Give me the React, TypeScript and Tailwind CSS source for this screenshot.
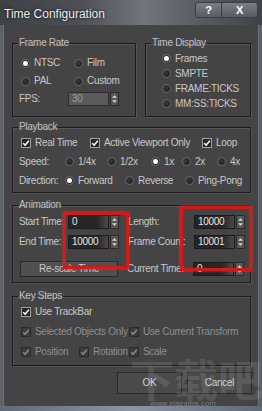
import type { ReactNode } from "react";

const font = "font-['Liberation_Sans','DejaVu_Sans',sans-serif]";

function Radio({ on }: { on?: boolean }) {
  return (
    <span className="flex h-[9px] w-[9px] shrink-0 items-center justify-center rounded-full border border-[#6a6a6a] bg-[radial-gradient(circle_at_35%_35%,#3a3a3a,#161616)]">
      {on && <span className="h-[5px] w-[5px] rounded-full bg-white" />}
    </span>
  );
}

function Check({ dim }: { dim?: boolean }) {
  return (
    <span
      className={
        "flex h-[10px] w-[10px] shrink-0 items-center justify-center border " +
        (dim ? "border-[#2a2a2a] bg-[#3c3c3c]" : "border-[#a0a0a0] bg-[#262626]")
      }
    >
      <svg viewBox="0 0 10 10" className="h-[8px] w-[8px]">
        <path
          d="M1.5 5.2 L4 7.6 L8.6 2.2"
          fill="none"
          stroke={dim ? "#8a8a8a" : "#ffffff"}
          strokeWidth="1.8"
        />
      </svg>
    </span>
  );
}

function Opt({ label, on, w }: { label: string; on?: boolean; w?: string }) {
  return (
    <div className={"flex items-center gap-[4px] " + (w ?? "")}>
      <Radio on={on} />
      <span className="whitespace-nowrap">{label}</span>
    </div>
  );
}

function Box({ label, dim, w }: { label: string; dim?: boolean; w?: string }) {
  return (
    <div className={"flex items-center gap-[4px] " + (w ?? "") + (dim ? " text-[#8e8e8e]" : "")}>
      <Check dim={dim} />
      <span className="whitespace-nowrap">{label}</span>
    </div>
  );
}

function Spin({ value, off }: { value: string; off?: boolean }) {
  return (
    <div className="flex items-center gap-[1px]">
      <div
        className={
          "flex h-[14px] w-[41px] items-center border pl-[3px] text-[10px] " +
          (off
            ? "border-[#2e2e2e] bg-[#5a5a5a] text-[#9a9a9a]"
            : "border-[#1c1c1c] bg-[linear-gradient(90deg,#262626_70%,#4a4a4a)] text-[#e6e6e6]")
        }
      >
        {value}
      </div>
      <div className="flex h-[14px] w-[9px] flex-col items-center justify-center gap-[2px] border border-[#2a2a2a] bg-[#585858]">
        <svg viewBox="0 0 6 3" className="h-[3px] w-[5px]">
          <path d="M0 3 L3 0 L6 3 Z" fill="#d8d8d8" />
        </svg>
        <svg viewBox="0 0 6 3" className="h-[3px] w-[5px]">
          <path d="M0 0 L3 3 L6 0 Z" fill="#d8d8d8" />
        </svg>
      </div>
    </div>
  );
}

function Group({ title, className, children }: { title: string; className?: string; children: ReactNode }) {
  return (
    <fieldset className={"border border-[#1b1b1b] shadow-[inset_1px_1px_0_#555,1px_1px_0_#555] " + (className ?? "")}>
      <legend className="ml-[5px] px-[1px] text-[10px] leading-[12px] text-[#c0c0c0]">{title}</legend>
      {children}
    </fieldset>
  );
}

export default function App() {
  return (
    <div className={"relative h-[411px] w-[262px] overflow-hidden bg-[#5c6067] text-[10px] leading-[12px] tracking-[-0.3px] text-[#c8c8c8] " + font}>
      {/* title bar */}
      <div className="flex h-[25px] items-start bg-[linear-gradient(90deg,#3e4146_0%,#4c4f55_30%,#72767c_55%,#5a5d63_75%,#3f4247_100%)]">
        <span className="ml-[4px] mt-[7px] text-[12px] leading-[14px] tracking-normal text-[#eeeeee] [text-shadow:0_0_3px_#000]">
          Time Configuration
        </span>
        <div className="ml-auto mr-[4px] mt-[2px] flex">
          <div className="flex h-[16px] w-[27px] items-center justify-center rounded-l-[3px] border border-[#3a3d42] bg-[linear-gradient(#7a7e84,#585c62)] text-[11px] font-bold text-white">
            ?
          </div>
          <div className="flex h-[16px] w-[36px] items-center justify-center rounded-r-[3px] border border-l-0 border-[#3a3d42] bg-[linear-gradient(#7a7e84,#585c62)] text-[11px] font-bold text-white">
            X
          </div>
        </div>
      </div>

      {/* body */}
      <div className="mx-[3px] flex h-[381px] flex-col rounded-b-[3px] border-x border-[#6e7278] bg-[#444444] pl-[8px] pr-[6px] pt-[12px]">
        <div className="flex gap-[9px]">
          <Group title="Frame Rate" className="w-[124px]">
            <div className="pb-[8px] pt-[5px]">
              <div className="flex h-[18px] items-center pl-[8px]">
                <Opt label="NTSC" on w="w-[53px]" />
                <Opt label="Film" />
              </div>
              <div className="flex h-[18px] items-center pl-[8px]">
                <Opt label="PAL" w="w-[53px]" />
                <Opt label="Custom" />
              </div>
              <div className="flex h-[18px] items-center pl-[6px]">
                <span className="w-[49px]">FPS:</span>
                <Spin value="30" off />
              </div>
            </div>
          </Group>
          <Group title="Time Display" className="w-[106px]">
            <div className="pl-[16px] pt-[2px]">
              <div className="flex h-[15px] items-center"><Opt label="Frames" on /></div>
              <div className="flex h-[15px] items-center"><Opt label="SMPTE" /></div>
              <div className="flex h-[15px] items-center"><Opt label="FRAME:TICKS" /></div>
              <div className="flex h-[15px] items-center"><Opt label="MM:SS:TICKS" /></div>
            </div>
          </Group>
        </div>

        <Group title="Playback" className="mt-[4px] w-[239px]">
          <div className="pb-[2px]">
            <div className="flex h-[19px] items-center pl-[8px]">
              <Box label="Real Time" w="w-[69px]" />
              <Box label="Active Viewport Only" w="w-[112px]" />
              <Box label="Loop" />
            </div>
            <div className="flex h-[19px] items-center pl-[6px]">
              <span className="w-[46px]">Speed:</span>
              <Opt label="1/4x" w="w-[42px]" />
              <Opt label="1/2x" w="w-[44px]" />
              <Opt label="1x" on w="w-[31px]" />
              <Opt label="2x" w="w-[35px]" />
              <Opt label="4x" />
            </div>
            <div className="flex h-[19px] items-center pl-[6px]">
              <span className="w-[46px]">Direction:</span>
              <Opt label="Forward" on w="w-[60px]" />
              <Opt label="Reverse" w="w-[60px]" />
              <Opt label="Ping-Pong" />
            </div>
          </div>
        </Group>

        <Group title="Animation" className="mt-[6px] w-[239px]">
          <div className="pb-[5px] pt-[1px]">
            <div className="flex h-[20px] items-center pl-[6px]">
              <span className="w-[49px]">Start Time:</span>
              <Spin value="0" />
              <span className="ml-[9px] w-[66px]">Length:</span>
              <Spin value="10000" />
            </div>
            <div className="flex h-[20px] items-center pl-[6px]">
              <span className="w-[49px]">End Time:</span>
              <Spin value="10000" />
              <span className="ml-[9px] w-[66px]">Frame Count:</span>
              <Spin value="10001" />
            </div>
            <div className="mt-[9px] flex h-[16px] items-center pl-[7px]">
              <div className="flex h-[16px] w-[98px] items-center justify-center border border-[#2a2a2a] bg-[#505050] text-[#c8c8c8]">
                Re-scale Time
              </div>
              <span className="ml-[9px] w-[66px]">Current Time:</span>
              <Spin value="0" />
            </div>
          </div>
        </Group>

        <Group title="Key Steps" className="mt-[7px] w-[239px]">
          <div className="pb-[3px]">
            <div className="flex h-[20px] items-center pl-[8px]">
              <Box label="Use TrackBar" />
            </div>
            <div className="flex h-[20px] items-center pl-[8px]">
              <Box label="Selected Objects Only" dim w="w-[108px]" />
              <Box label="Use Current Transform" dim />
            </div>
            <div className="flex h-[20px] items-center pl-[8px]">
              <Box label="Position" dim w="w-[58px]" />
              <Box label="Rotation" dim w="w-[50px]" />
              <Box label="Scale" dim />
            </div>
          </div>
        </Group>

        <div className="mt-[6px] flex justify-end gap-[5px]">
          <div className="flex h-[22px] w-[65px] items-center justify-center border border-[#2a2a2a] bg-[#4a4a4a] text-[#d0d0d0]">
            OK
          </div>
          <div className="flex h-[22px] w-[65px] items-center justify-center border border-[#2a2a2a] bg-[#4a4a4a] text-[#d0d0d0]">
            Cancel
          </div>
        </div>
      </div>
      <div className="h-[5px] bg-[linear-gradient(90deg,#5d6a78,#8a96a3,#5d6a78)]" />

      {/* red highlight marks */}
      <div className="absolute left-[63px] top-[212px] h-[57px] w-[66px] border-[3px] border-[#d11a1a] shadow-[0_0_2px_#ff3030]" />
      <div className="absolute left-[180px] top-[206px] h-[65px] w-[72px] border-[3px] border-[#d11a1a] shadow-[0_0_2px_#ff3030]" />

      {/* watermark */}
      <div className="pointer-events-none absolute left-[130px] top-[346px] font-['Noto_Sans_CJK_SC',sans-serif] text-[44px] font-bold leading-[64px] tracking-normal text-white/10">
        下载吧
      </div>
      <div className="pointer-events-none absolute left-[150px] top-[399px] text-[8px] leading-[10px] tracking-normal text-white/30">
        www.xiazaiba.com
      </div>
    </div>
  );
}
